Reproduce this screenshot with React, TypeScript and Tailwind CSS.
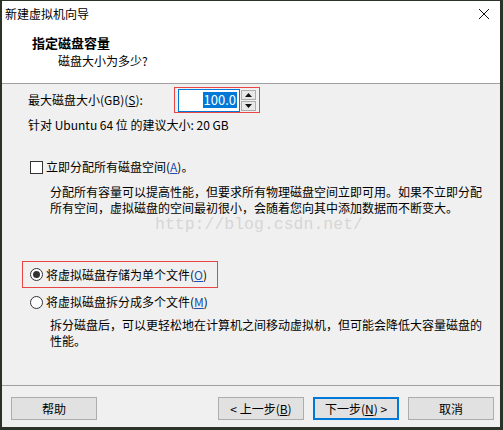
const font = { fontFamily: '"Noto Sans CJK SC", "Noto Sans", sans-serif' };

const WizardButton = ({ label, focused }: { label: React.ReactNode; focused?: boolean }) => (
    <button
        className={
            focused
                ? 'w-[86px] h-[23px] bg-[#e1e1e1] border-2 border-[#0078d7] text-[12px] text-black flex items-center justify-center'
                : 'w-[86px] h-[23px] bg-[#e1e1e1] border border-[#adadad] text-[12px] text-black flex items-center justify-center'
        }
    >
        {label}
    </button>
);

const Radio = ({ checked }: { checked?: boolean }) => (
    <span className="w-[13px] h-[13px] rounded-full border border-[#333] bg-white flex items-center justify-center shrink-0">
        {checked ? <span className="w-[7px] h-[7px] rounded-full bg-[#333]" /> : null}
    </span>
);

export default function App() {
    return (
        <div
            className="w-[503px] h-[430px] bg-[#2b3328] pl-[2px] pr-[3px] pb-[3px] pt-[1px] text-[12px] text-black leading-4"
            style={font}
        >
            <div className="relative flex flex-col w-full h-full bg-[#f0f0f0]">
                {/* title + header */}
                <div className="h-[83px] bg-white border-b border-[#a0a0a0] shrink-0">
                    <div className="flex items-center justify-between h-[26px] pl-[3px] pr-[10px]">
                        <span>新建虚拟机向导</span>
                        <svg width="12" height="12" viewBox="0 0 12 12">
                            <path d="M1 1 L11 11 M11 1 L1 11" stroke="#111" strokeWidth="1" />
                        </svg>
                    </div>
                    <div className="pl-[30px] mt-[8px] font-bold text-[13px]">指定磁盘容量</div>
                    <div className="pl-[56px] mt-[2px]">磁盘大小为多少?</div>
                </div>

                {/* body */}
                <div className="flex flex-col pl-[26px]">
                    <div className="flex items-center mt-[3px] h-[26px]">
                        <span className="w-[146px]">
                            最大磁盘大小(GB)(<span className="underline">S</span>):
                        </span>
                        <div className="flex items-center h-[26px] w-[86px] border border-[#e84545] pl-[3px]">
                            <div className="flex items-center justify-end w-[62px] h-[23px] bg-white border border-[#0078d7] pr-[2px]">
                                <span className="bg-[#0078d7] text-white px-[1px] text-[13px] leading-[16px]">100.0</span>
                            </div>
                            <div className="flex flex-col gap-[1px] ml-[1px]">
                                <div className="w-[15px] h-[10px] bg-[#e8e8e8] border border-[#adadad] flex items-center justify-center">
                                    <svg width="7" height="4" viewBox="0 0 7 4"><path d="M3.5 0 L7 4 L0 4 Z" fill="#111" /></svg>
                                </div>
                                <div className="w-[15px] h-[10px] bg-[#e8e8e8] border border-[#adadad] flex items-center justify-center">
                                    <svg width="7" height="4" viewBox="0 0 7 4"><path d="M0 0 L7 0 L3.5 4 Z" fill="#111" /></svg>
                                </div>
                            </div>
                        </div>
                    </div>
                    <div className="mt-[4px]">针对 Ubuntu 64 位 的建议大小: 20 GB</div>

                    <div className="flex items-center gap-[3px] mt-[26px] pl-[2px]">
                        <span className="w-[13px] h-[13px] border border-[#333] bg-white shrink-0" />
                        <span>
                            立即分配所有磁盘空间(<span className="underline text-[#1a50b0]">A</span>)。
                        </span>
                    </div>
                    <div className="pl-[22px] mt-[9px] leading-[16px] whitespace-nowrap">
                        分配所有容量可以提高性能，但要求所有物理磁盘空间立即可用。如果不立即分配
                        <br />
                        所有空间，虚拟磁盘的空间最初很小，会随着您向其中添加数据而不断变大。
                    </div>

                    <div className="flex items-center gap-[3px] mt-[45px] ml-[-6px] w-[196px] h-[27px] border border-[#e84545] pl-[7px]">
                        <Radio checked />
                        <span>
                            将虚拟磁盘存储为单个文件(<span className="underline text-[#1a50b0]">O</span>)
                        </span>
                    </div>
                    <div className="flex items-center gap-[3px] mt-[6px] pl-[2px]">
                        <Radio />
                        <span>
                            将虚拟磁盘拆分成多个文件(<span className="underline text-[#1a50b0]">M</span>)
                        </span>
                    </div>
                    <div className="pl-[22px] mt-[7px] leading-[16px] whitespace-nowrap">
                        拆分磁盘后，可以更轻松地在计算机之间移动虚拟机，但可能会降低大容量磁盘的
                        <br />
                        性能。
                    </div>
                </div>

                {/* watermark */}
                <div
                    className="absolute left-[153px] top-[215px] text-[16.5px] leading-[18px] text-[#d6d6d6]"
                    style={{ fontFamily: '"Liberation Mono", monospace' }}
                >
                    http://blog.csdn.net/
                </div>

                {/* footer */}
                <div className="mt-auto border-t border-[#a0a0a0] flex items-center pt-[11px] pb-[7px] pl-[9px] pr-[6px]">
                    <WizardButton label="帮助" />
                    <div className="ml-auto flex gap-[9px]">
                        <WizardButton label={<>&lt; 上一步(<span className="underline">B</span>)</>} />
                        <WizardButton focused label={<>下一步(<span className="underline">N</span>) &gt;</>} />
                        <WizardButton label="取消" />
                    </div>
                </div>
            </div>
        </div>
    );
}
